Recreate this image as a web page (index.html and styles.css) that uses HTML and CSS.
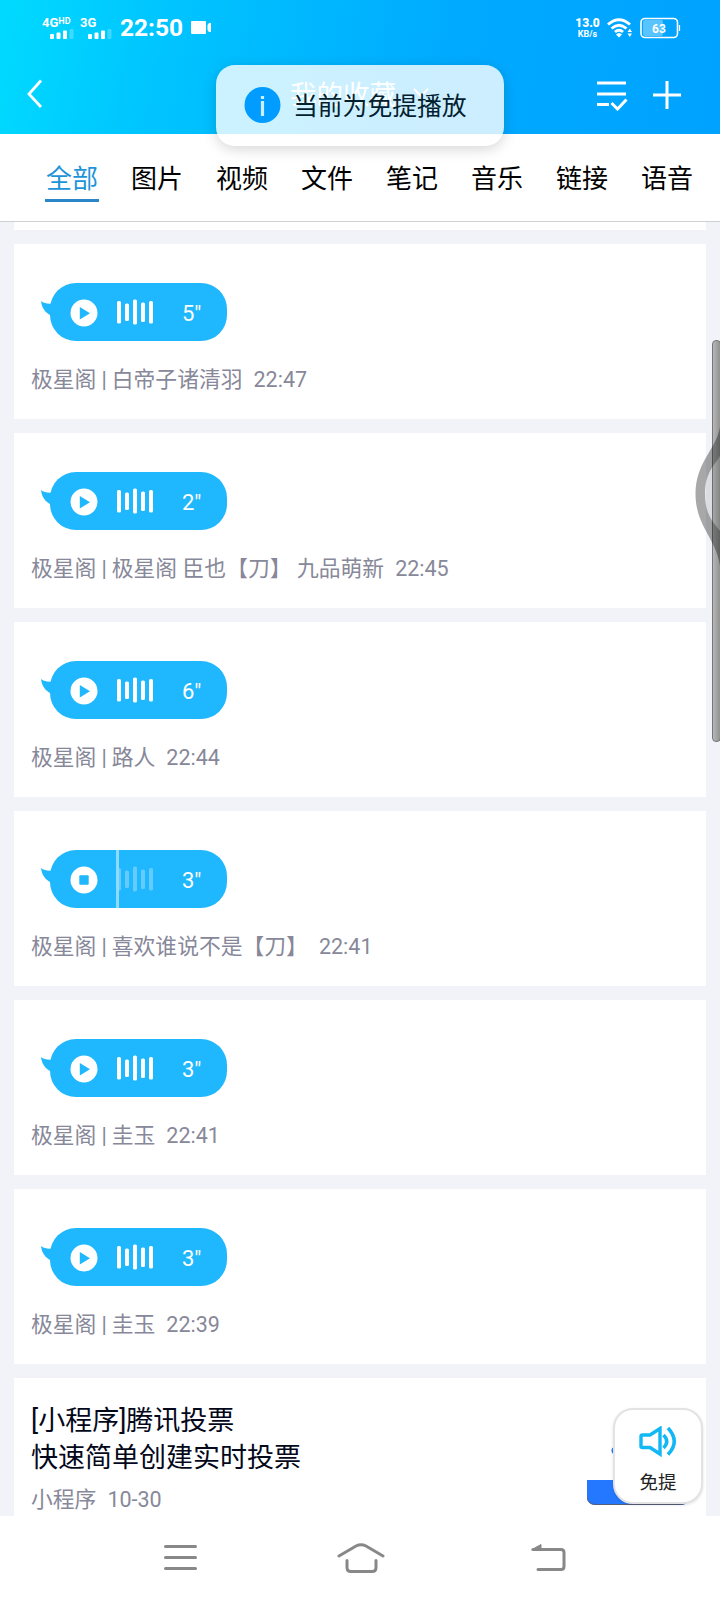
FILE: index.html
```html
<!DOCTYPE html>
<html lang="zh-CN">
<head>
<meta charset="utf-8">
<title>我的收藏</title>
<link rel="stylesheet" href="styles.css">
</head>
<body>
<svg class="defs" width="0" height="0">
  <symbol id="tail" viewBox="0 0 14 16"><path d="M0 0C3 2.500 7 3 12 2.500L13 16C7 13.500 1 9.500 0 0Z" fill="#1fb7fd"/></symbol>
  <symbol id="play" viewBox="0 0 28 28"><circle cx="14" cy="14" r="13.500" fill="#fff"/><path d="M9.800 8v12.500L20 14.200Z" fill="#1fb7fd"/></symbol>
  <symbol id="stop" viewBox="0 0 28 28"><circle cx="14" cy="14" r="13.500" fill="#fff"/><rect x="9.300" y="9.300" width="9.400" height="9.400" rx="1" fill="#1fb7fd"/></symbol>
  <symbol id="wave" viewBox="0 0 37 26"><g fill="#fff"><rect x="0" y="2" width="4" height="22.500" rx="1.500"/><rect x="8" y="4.500" width="4" height="17.500" rx="1.500"/><rect x="16" y="0.500" width="4" height="25" rx="1.500"/><rect x="24" y="3.500" width="4" height="19.500" rx="1.500"/><rect x="32" y="2" width="4" height="22.500" rx="1.500"/></g></symbol>
  <symbol id="signal" viewBox="0 0 24 12"><g fill="#fff"><rect x="0" y="6" width="4" height="5" rx="1"/><rect x="6.500" y="4.500" width="4" height="6.500" rx="1"/><rect x="13" y="2.500" width="4" height="8.500" rx="1"/><rect x="19.500" y="1" width="4" height="10" rx="1" opacity=".25"/></g></symbol>
</svg>
<div class="screen">
  <header class="header">
    <div class="status">
      <div class="net net-hd"><span>4G<sup>HD</sup></span><svg width="24" height="12"><use href="#signal"/></svg></div>
      <div class="net"><span>3G</span><svg width="24" height="12"><use href="#signal"/></svg></div>
      <span class="clock">22:50</span>
      <svg class="cam" width="21" height="15" viewBox="0 0 21 15"><path d="M1 1h13q1 0 1 1v11q0 1-1 1H1q-1 0-1-1V2q0-1 1-1ZM20 3v9h-2l-1.500-2V5L18 3Z" fill="#fff"/></svg>
      <div class="speed"><b>13.0</b><span>KB/s</span></div>
      <svg class="wifi" width="26" height="20" viewBox="0 0 26 20"><g fill="none" stroke="#fff" stroke-width="2.900"><path d="M1 6.500Q12 -3 23 6.500"/><path d="M4.500 10.500Q12 4 19.500 10.500"/><path d="M8 14Q12 10.500 16 14"/></g><path d="M9 16.500Q12 13.500 15 16.500L12 19.500ZM20.500 14 22.800 10.500 25 14ZM20.500 15.500 22.800 19 25 15.500Z" fill="#fff"/></svg>
      <svg class="battery" width="41" height="22" viewBox="0 0 41 22"><rect x="1" y="1.500" width="36.500" height="19" rx="4" fill="none" stroke="#fff" stroke-width="1.600"/><rect x="3" y="3" width="20" height="16" rx="2" fill="#fff" opacity=".35"/><path d="M39.500 8v6" stroke="#fff" stroke-width="1.200"/><text x="19" y="15.500" text-anchor="middle" class="level">63</text></svg>
    </div>
    <div class="bar">
      <svg class="back" width="17" height="30" viewBox="0 0 17 30"><path d="M15 1.500 3 15 15 28" fill="none" stroke="#fff" stroke-width="2.800"/></svg>
      <div class="title"><span>我的收藏</span><svg width="16" height="10" viewBox="0 0 16 10"><path d="M1 1l7 7 7-7" fill="none" stroke="#fff" stroke-width="2"/></svg></div>
      <svg class="select" width="31" height="31" viewBox="0 0 31 31"><path d="M0 3h29M0 14h29M0 24.500h12M14.500 23l6 6 9-9.500" fill="none" stroke="#fff" stroke-width="3"/></svg>
      <svg class="add" width="28" height="28" viewBox="0 0 28 28"><path d="M14 0v28M0 14h28" stroke="#fff" stroke-width="3"/></svg>
    </div>
  </header>
  <nav class="tabs">
    <span class="tab active">全部</span><span class="tab">图片</span><span class="tab">视频</span><span class="tab">文件</span><span class="tab">笔记</span><span class="tab">音乐</span><span class="tab">链接</span><span class="tab">语音</span>
  </nav>
  <main class="list">
    <div class="card sliver"></div>
    <article class="card voice">
      <div class="bubble"><svg class="tail"><use href="#tail"/></svg><svg class="btn"><use href="#play"/></svg><svg class="wave"><use href="#wave"/></svg><span class="dur">5"</span></div>
      <p class="meta"><span>极星阁<i>|</i>白帝子诸清羽</span><time>22:47</time></p>
    </article>
    <article class="card voice">
      <div class="bubble"><svg class="tail"><use href="#tail"/></svg><svg class="btn"><use href="#play"/></svg><svg class="wave"><use href="#wave"/></svg><span class="dur">2"</span></div>
      <p class="meta"><span>极星阁<i>|</i>极星阁 臣也【刀】 九品萌新</span><time>22:45</time></p>
    </article>
    <article class="card voice">
      <div class="bubble"><svg class="tail"><use href="#tail"/></svg><svg class="btn"><use href="#play"/></svg><svg class="wave"><use href="#wave"/></svg><span class="dur">6"</span></div>
      <p class="meta"><span>极星阁<i>|</i>路人</span><time>22:44</time></p>
    </article>
    <article class="card voice">
      <div class="bubble playing"><svg class="tail"><use href="#tail"/></svg><svg class="btn"><use href="#stop"/></svg><svg class="wave"><use href="#wave"/></svg><span class="dur">3"</span></div>
      <p class="meta"><span>极星阁<i>|</i>喜欢谁说不是【刀】</span><time>22:41</time></p>
    </article>
    <article class="card voice">
      <div class="bubble"><svg class="tail"><use href="#tail"/></svg><svg class="btn"><use href="#play"/></svg><svg class="wave"><use href="#wave"/></svg><span class="dur">3"</span></div>
      <p class="meta"><span>极星阁<i>|</i>圭玉</span><time>22:41</time></p>
    </article>
    <article class="card voice">
      <div class="bubble"><svg class="tail"><use href="#tail"/></svg><svg class="btn"><use href="#play"/></svg><svg class="wave"><use href="#wave"/></svg><span class="dur">3"</span></div>
      <p class="meta"><span>极星阁<i>|</i>圭玉</span><time>22:39</time></p>
    </article>
    <article class="card app">
      <div class="app-text">
        <h2>[小程序]腾讯投票<br>快速简单创建实时投票</h2>
        <p class="meta"><span>小程序</span><time>10-30</time></p>
      </div>
      <svg class="thumb" width="102" height="102" viewBox="0 0 102 102"><circle cx="28" cy="47.500" r="3.500" fill="#2378ff"/><path d="M0 77h102v16q0 9-9 9H9q-9 0-9-9Z" fill="#2378ff"/><path d="M0 93q0 8.500 9 8.500h84q9 0 9-8.500" fill="none" stroke="#555f78"/></svg>
    </article>
  </main>
  <footer class="sysnav">
    <svg width="34" height="28" viewBox="0 0 34 28"><path d="M1.500 2.500h30M1.500 13.500h30M1.500 24.500h30"/></svg>
    <svg class="home" width="48" height="32" viewBox="0 0 48 32"><path d="M2 14 19 4Q24 1.500 29 4L46 14M10 18.500v7q0 4 4 4h21q4 0 4-4v-7"/></svg>
    <svg width="36" height="30" viewBox="0 0 36 30"><path d="M2 6.500h28q3 0 3 3v14q0 3-3 3H7"/><path class="tip" d="M1 6.500 10 1.500V6.500Z"/></svg>
  </footer>

  <div class="toast">
    <svg width="37" height="37" viewBox="0 0 37 37"><circle cx="18.500" cy="18" r="18" fill="#009cff"/><path d="M18.500 9v3M18.500 14v15" stroke="#ccefff" stroke-width="3.200"/></svg>
    <span>当前为免提播放</span>
  </div>
  <div class="scrollbar"></div>
  <svg class="edge" width="26" height="146" viewBox="0 0 26 146"><path d="M25 7C22 28 .500 42 .500 74S22 120 25 146V111C19 103 10 95 10 74S19 46 25 36Z" fill="#000" opacity=".34"/><path d="M25 36C19 46 10 53 10 74S19 103 25 111Z" fill="#000" opacity=".09"/></svg>
  <div class="speaker">
    <svg width="40" height="32" viewBox="0 0 40 32"><g fill="none" stroke="#12b7f5" stroke-width="3.400"><path d="M3 10.500Q3 9 4.500 9H12L22 2.500V28L12 21.500H4.500Q3 21.500 3 20Z"/><path d="M25.500 9Q32 15.500 25.500 22M30 2Q42.500 15.500 30 28.500"/></g></svg>
    <span>免提</span>
  </div>
</div>
</body>
</html>
```
FILE: styles.css
```css
* { box-sizing: border-box; }
body { margin: 0; background: #fff; font-family: Roboto, "Noto Sans CJK SC", sans-serif; font-weight: 400; }
svg { display: block; flex: none; }
.defs { position: absolute; }
.screen { position: relative; width: 720px; height: 1600px; overflow: hidden; display: flex; flex-direction: column; background: #f2f3f9; }

.header { flex: none; height: 134px; color: #fff; background: linear-gradient(100deg, #00daff 0%, #00c4ff 23%, #00aaff 63%, #00a2ff 100%); }
.status { display: flex; height: 55px; padding: 16px 39px 0 42px; align-items: flex-start; }
.net { width: 37px; display: flex; flex-direction: column; font-size: 13px; line-height: 13px; font-weight: 700; }
.net-hd { width: 38px; }
.net sup { font-size: 9px; line-height: 0; vertical-align: 3px; }
.net svg { margin-left: 8px; margin-top: -1px; }
.clock { margin-left: 3px; width: 71px; font-size: 24.500px; line-height: 24px; font-weight: 700; }
.cam { margin-top: 4px; }
.speed { margin-left: auto; width: 25px; display: flex; flex-direction: column; align-items: center; font-size: 12px; line-height: 14px; font-weight: 700; }
.speed span { font-size: 9px; line-height: 8px; }
.wifi { margin: 2px 0 0 7px; }
.battery { margin: 1px 0 0 7px; }
.level { font: 700 12px Roboto, sans-serif; fill: #fff; }
.bar { display: flex; height: 79px; padding: 0 39px 0 26px; align-items: center; }
.back { margin-bottom: 1px; }
.title { display: flex; align-items: center; gap: 17px; margin: 0 0 4px 247px; font-size: 26.500px; }
.select { margin: 2px 25px 0 auto; }

.tabs { flex: none; display: flex; gap: 31px; height: 88px; padding: 27px 0 0 45px; background: #fff; border-bottom: 1px solid #cfd0d3; }
.tab { flex: none; width: 54px; height: 41px; padding-left: 1px; font-size: 26px; line-height: 36px; color: #000; }
.active { color: #1e94d8; border-bottom: 3px solid #2b87c8; }

.list { flex: none; height: 1294px; overflow: hidden; display: flex; flex-direction: column; gap: 14px; padding: 0 14px; }
.card { flex: none; background: #fff; height: 175px; }
.sliver { height: 8px; }
.voice { padding: 39px 17px 0; }
.bubble { position: relative; display: flex; align-items: center; width: 176.500px; height: 58px; margin-left: 19px; padding-left: 19.500px; border-radius: 26px; background: #1fb7fd; color: #fff; }
.tail { position: absolute; left: -9.500px; top: 18px; width: 14px; height: 16px; }
.btn { width: 28px; height: 28px; margin-top: 1px; }
.wave { width: 37px; height: 26px; margin-left: 19.500px; }
.dur { margin: 3px 0 0 28px; font-size: 22px; line-height: 26px; }
.playing .wave { opacity: .3; }
.playing::after { content: ""; position: absolute; left: 66px; top: 0; width: 3px; height: 58px; background: #8fdafe; }
.meta { display: flex; gap: 11px; margin: 23px 0 0; font-size: 21.800px; line-height: 32px; color: #878899; white-space: pre; }
.meta time { font-size: 21.500px; }
.meta i { font-style: normal; margin: 0 5px; }
.app { display: flex; justify-content: space-between; padding: 25px 17px 0; }
.app h2 { margin: 0; font-size: 27px; line-height: 37px; font-weight: 400; color: #03081a; }
.app .meta { margin-top: 7px; }

.sysnav { flex: 1; display: flex; justify-content: space-between; align-items: center; padding: 0 153px 0 164px; background: #fff; }
.sysnav path { fill: none; stroke: #888; stroke-width: 3; stroke-linecap: round; stroke-linejoin: round; }
.sysnav .home { margin-right: 7px; }
.sysnav .tip { fill: #888; stroke-width: 1; }

.toast { position: absolute; left: 216px; top: 65px; width: 288px; height: 81px; display: flex; align-items: center; padding-left: 28px; gap: 12px; border-radius: 19px; background: rgba(255,255,255,.8); box-shadow: 0 3px 14px rgba(0,0,0,.17); font-size: 24.800px; color: #03202e; }
.toast span { margin-bottom: 4px; }
.scrollbar { position: absolute; left: 712px; top: 340px; width: 9px; height: 402px; border: 1px solid #777; border-radius: 4px; background: linear-gradient(90deg, #b7b7b7, #929292); }
.edge { position: absolute; left: 695px; top: 420px; }
.speaker { position: absolute; left: 613px; top: 1408px; width: 90px; height: 96px; display: flex; flex-direction: column; align-items: center; padding-top: 16px; border: 2px solid #e3e3e5; border-radius: 20px; background: #fff; font-size: 18.500px; line-height: 27px; color: #222; box-shadow: 0 1px 3px rgba(0,0,0,.12); }
.speaker svg { margin-bottom: 12px; }
```
